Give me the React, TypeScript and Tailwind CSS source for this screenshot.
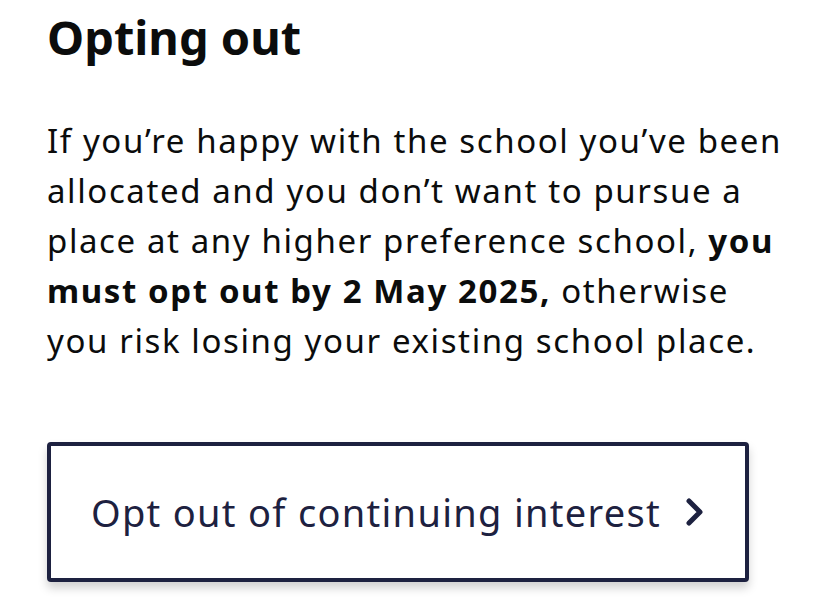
export default function App() {
  return (
    <div className="min-h-[600px] bg-white px-[47px] pt-[8px] font-['Noto_Sans',sans-serif] text-[#0b0c0c]">
      <h2 className="text-[47px] leading-[58px] font-bold">Opting out</h2>

      <p className="mt-[50px] w-[745px] text-[33px] leading-[50px] tracking-[1.6px]">
        If you’re happy with the school you’ve been allocated and you don’t want to pursue a place at any higher
        preference school, <strong className="font-bold">you must opt out by 2 May 2025,</strong> otherwise you risk
        losing your existing school place.
      </p>

      <a
        href="#"
        className="mt-[76px] flex h-[140px] w-[702px] items-center justify-center gap-[24px] rounded-[4px] border-4 border-[#1d2140] bg-white text-[38px] tracking-[1.3px] text-[#1d2140] shadow-[0_6px_10px_rgba(0,0,0,0.18)]"
      >
        <span>Opt out of continuing interest</span>
        <svg width="20" height="28" viewBox="0 0 20 28" fill="none" stroke="currentColor" strokeWidth="5" strokeLinecap="round" strokeLinejoin="round">
          <path d="M4 3 L15 14 L4 25" />
        </svg>
      </a>
    </div>
  );
}
